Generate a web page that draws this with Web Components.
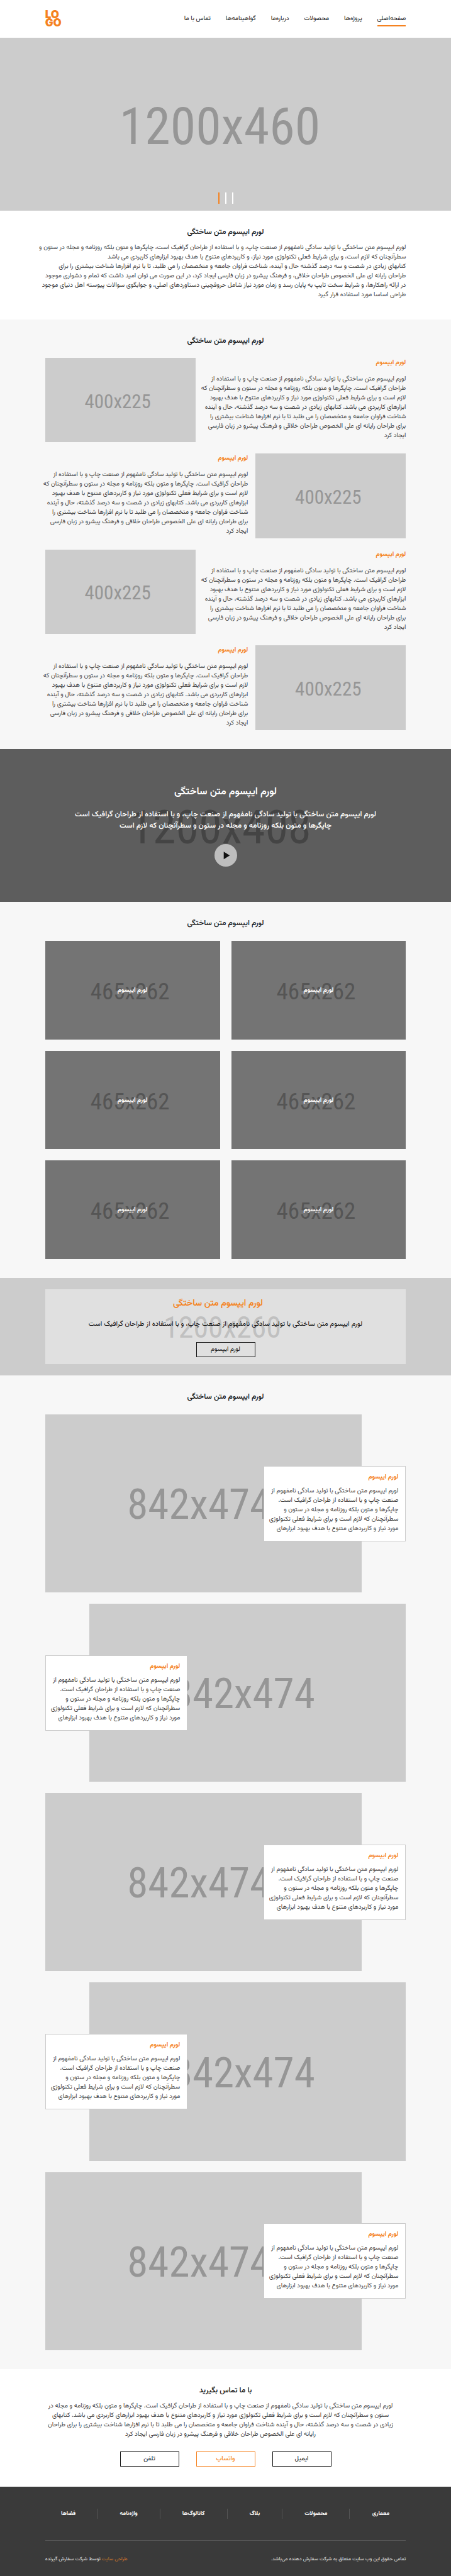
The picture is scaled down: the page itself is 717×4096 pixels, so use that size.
<!DOCTYPE html>
<html lang="fa" dir="rtl">
<head>
<meta charset="utf-8">
<meta name="viewport" content="width=device-width, initial-scale=1">
<title>لورم ایپسوم</title>
<style>
  body {
    margin: 0;
    background: #fff;
    color: #444;
    font: 400 10px/15px Vazirmatn, "DejaVu Sans", sans-serif;
    --accent: #f58220;
    --ink: #111;
    --side: 10%;
  }
</style>
</head>
<body>
<site-header></site-header>
<main>
  <hero-slider></hero-slider>
  <page-section>
    <span slot="title">لورم ایپسوم متن ساختگی</span>
    <text-block>لورم ایپسوم متن ساختگی با تولید سادگی نامفهوم از صنعت چاپ، و با استفاده از طراحان گرافیک است، چاپگرها و متون بلکه روزنامه و مجله در ستون و<br>سطرآنچنان که لازم است، و برای شرایط فعلی تکنولوژی مورد نیاز، و کاربردهای متنوع با هدف بهبود ابزارهای کاربردی می باشد<br>کتابهای زیادی در شصت و سه درصد گذشته حال و آینده، شناخت فراوان جامعه و متخصصان را می طلبد، تا با نرم افزارها شناخت بیشتری را برای<br>طراحان رایانه ای علی الخصوص طراحان خلاقی، و فرهنگ پیشرو در زبان فارسی ایجاد کرد، در این صورت می توان امید داشت که تمام و دشواری موجود<br>در ارائه راهکارها، و شرایط سخت تایپ به پایان رسد و زمان مورد نیاز شامل حروفچینی دستاوردهای اصلی، و جوابگوی سوالات پیوسته اهل دنیای موجود<br>طراحی اساسا مورد استفاده قرار گیرد</text-block>
  </page-section>
  <page-section shaded>
    <span slot="title">لورم ایپسوم متن ساختگی</span>
    <feature-list></feature-list>
  </page-section>
  <video-banner></video-banner>
  <page-section shaded>
    <span slot="title">لورم ایپسوم متن ساختگی</span>
    <tile-grid></tile-grid>
  </page-section>
  <promo-banner></promo-banner>
  <page-section shaded>
    <span slot="title">لورم ایپسوم متن ساختگی</span>
    <story-list></story-list>
  </page-section>
  <page-section>
    <span slot="title">با ما تماس بگیرید</span>
    <contact-panel></contact-panel>
  </page-section>
</main>
<site-footer></site-footer>

<script>
const define = (name, html) => {
  const template = document.createElement('template');
  template.innerHTML = html;
  customElements.define(name, class extends HTMLElement {
    constructor() {
      super();
      this.attachShadow({ mode: 'open' }).append(template.content.cloneNode(true));
    }
  });
};

/* Grey picture stand-in; the slot holds its dimensions label. */
define('picture-box', `
  <style>
    :host { display: flex; align-items: center; justify-content: center; box-sizing: border-box;
      direction: ltr; overflow: hidden; background: #ccc; color: #969696; white-space: nowrap;
      font-family: "Roboto Condensed", "Liberation Sans", sans-serif; font-weight: 400; line-height: 1; }
    :host([size="hero"])    { font-size: 82px; padding: 8px 18px 0 0; aspect-ratio: 1200 / 460; }
    :host([size="video"])   { font-size: 74px; padding: 8px 16px 0 0; }
    :host([size="promo"])   { font-size: 48px; padding: 4px 10px 0 0; }
    :host([size="story"])   { font-size: 67px; padding: 4px 14px 0 0; aspect-ratio: 842 / 474; }
    :host([size="tile"])    { font-size: 37px; padding: 4px 8px 0 0; aspect-ratio: 465 / 262; }
    :host([size="feature"]) { font-size: 31px; padding: 4px 8px 0 0; aspect-ratio: 400 / 225; }
  </style>
  <slot></slot>`);

define('text-block', `
  <style>
    :host { display: block; margin-top: 7px; }
    p { margin: 0; white-space: nowrap; }
  </style>
  <p><slot></slot></p>`);

define('page-section', `
  <style>
    :host { display: block; padding: 24px var(--side) 32px; }
    :host([shaded]) { background: #f7f7f7; padding-bottom: 30px; }
    h2 { margin: 0; font-size: 12px; line-height: 20px; font-weight: 500; color: var(--ink); text-align: center; }
  </style>
  <h2><slot name="title"></slot></h2>
  <slot></slot>`);

define('outline-button', `
  <style>
    :host { display: block; }
    button { box-sizing: border-box; width: 94px; height: 24px; padding: 0; background: none;
      border: 1px solid currentColor; color: var(--ink); font: inherit; line-height: 20px; cursor: pointer; }
    :host([accent]) button { color: var(--accent); font-weight: 500; }
  </style>
  <button type="button"><slot></slot></button>`);

define('site-header', `
  <style>
    :host { display: block; padding: 0 var(--side); background: #fff; }
    header { display: flex; align-items: center; justify-content: space-between; height: 60px; }
    nav { display: flex; gap: 24px; }
    nav a { padding: 2px 0; border-block: 2px solid transparent; color: var(--ink); line-height: 16px;
      text-decoration: none; white-space: nowrap; }
    nav a[aria-current] { border-bottom-color: var(--accent); }
    .logo { direction: ltr; color: var(--accent); font: 900 17px/13px Inter, "Liberation Sans", sans-serif;
      text-decoration: none; }
  </style>
  <header>
    <nav>
      <a href="#" aria-current="page">صفحه‌اصلی</a>
      <a href="#">پروژه‌ها</a>
      <a href="#">محصولات</a>
      <a href="#">درباره‌ما</a>
      <a href="#">گواهینامه‌ها</a>
      <a href="#">تماس با ما</a>
    </nav>
    <a class="logo" href="#">LO<br>GO</a>
  </header>`);

define('hero-slider', `
  <style>
    :host { display: grid; }
    picture-box, .dots { grid-area: 1 / 1; }
    .dots { align-self: end; justify-self: center; display: flex; gap: 9px; direction: ltr; padding-bottom: 11px; }
    button { width: 2px; height: 18px; padding: 0; border: 0; background: #fff; cursor: pointer; }
    button[aria-current] { background: var(--accent); }
  </style>
  <picture-box size="hero">1200x460</picture-box>
  <div class="dots">
    <button type="button" aria-label="اسلاید ۱" aria-current="true"></button>
    <button type="button" aria-label="اسلاید ۲"></button>
    <button type="button" aria-label="اسلاید ۳"></button>
  </div>`);

const featureRow = `
  <article>
    <div>
      <h3>لورم ایپسوم</h3>
      <p>لورم ایپسوم متن ساختگی با تولید سادگی نامفهوم از صنعت چاپ و با استفاده از<br>طراحان گرافیک است. چاپگرها و متون بلکه روزنامه و مجله در ستون و سطرآنچنان که<br>لازم است و برای شرایط فعلی تکنولوژی مورد نیاز و کاربردهای متنوع با هدف بهبود<br>ابزارهای کاربردی می باشد. کتابهای زیادی در شصت و سه درصد گذشته، حال و آینده<br>شناخت فراوان جامعه و متخصصان را می طلبد تا با نرم افزارها شناخت بیشتری را<br>برای طراحان رایانه ای علی الخصوص طراحان خلاقی و فرهنگ پیشرو در زبان فارسی<br>ایجاد کرد</p>
    </div>
    <picture-box size="feature">400x225</picture-box>
  </article>`;

define('feature-list', `
  <style>
    :host { display: grid; gap: 18px; margin-top: 17px; }
    article { display: flex; gap: 12px; align-items: flex-start; }
    article:nth-of-type(even) { flex-direction: row-reverse; }
    div { flex: 1; min-width: 0; }
    picture-box { flex: none; width: 41.6667%; }
    h3 { margin: 0 0 10px; font-size: 10px; line-height: 16px; font-weight: 700; color: var(--accent); }
    p { margin: 0; white-space: nowrap; }
  </style>
  ${featureRow.repeat(4)}`);

define('video-banner', `
  <style>
    :host { display: grid; aspect-ratio: 1200 / 408; color: #fff; text-align: center; }
    picture-box, .shade { grid-area: 1 / 1; }
    .shade { position: relative; padding-top: 57px; background: rgba(0, 0, 0, .545); }
    h2 { margin: 0 0 14px; font-size: 16px; line-height: 24px; font-weight: 600; }
    p { margin: 0 0 20px; font-size: 12px; line-height: 18px; font-weight: 500; }
    button { display: block; width: 36px; height: 36px; margin: 0 auto; padding: 0; border: 0;
      border-radius: 50%; background: #bebebe; cursor: pointer; }
    svg { display: block; margin: auto; }
  </style>
  <picture-box size="video">1200x408</picture-box>
  <div class="shade">
    <h2>لورم ایپسوم متن ساختگی</h2>
    <p>لورم ایپسوم متن ساختگی با تولید سادگی نامفهوم از صنعت چاپ، و با استفاده از طراحان گرافیک است<br>چاپگرها و متون بلکه روزنامه و مجله در ستون و سطرآنچنان که لازم است</p>
    <button type="button" aria-label="پخش ویدیو">
      <svg width="36" height="36" viewBox="0 0 60 60"><path d="M24.5 20.5v20l16-10z" fill="#111"/></svg>
    </button>
  </div>`);

define('tile-grid', `
  <style>
    :host { display: grid; grid-template-columns: 1fr 1fr; gap: 18px; margin-top: 18px; }
    a { display: grid; color: #fff; font-size: 10px; font-weight: 700; text-decoration: none; }
    picture-box, span { grid-area: 1 / 1; }
    span { position: relative; display: grid; place-items: center; background: rgba(0, 0, 0, .43); }
  </style>
  ${`<a href="#"><picture-box size="tile">465x262</picture-box><span>لورم ایپسوم</span></a>`.repeat(6)}`);

define('promo-banner', `
  <style>
    :host { display: grid; color: var(--ink); text-align: center; background: #ccc; }
    picture-box, .inner { grid-area: 1 / 1; }
    .inner { position: relative; box-sizing: border-box; margin: 18px var(--side); padding: 11px 0;
      background: rgba(255, 255, 255, .4); }
    h2 { margin: 0 0 13px; padding-inline-start: 24px; font-size: 14px; line-height: 24px;
      font-weight: 600; color: var(--accent); }
    p { margin: 0 0 20px; font-size: 11px; line-height: 16px; }
    outline-button { width: 94px; margin: 0 auto; }
  </style>
  <picture-box size="promo">1200x260</picture-box>
  <div class="inner">
    <h2>لورم ایپسوم متن ساختگی</h2>
    <p>لورم ایپسوم متن ساختگی با تولید سادگی نامفهوم از صنعت چاپ، و با استفاده از طراحان گرافیک است</p>
    <outline-button>لورم ایپسوم</outline-button>
  </div>`);

const story = `
  <article>
    <picture-box size="story">842x474</picture-box>
    <div>
      <h3>لورم ایپسوم</h3>
      <p>لورم ایپسوم متن ساختگی با تولید سادگی نامفهوم از<br>صنعت چاپ و با استفاده از طراحان گرافیک است.<br>چاپگرها و متون بلکه روزنامه و مجله در ستون و<br>سطرآنچنان که لازم است و برای شرایط فعلی تکنولوژی<br>مورد نیاز و کاربردهای متنوع با هدف بهبود ابزارهای</p>
    </div>
  </article>`;

define('story-list', `
  <style>
    :host { display: grid; gap: 18px; margin-top: 18px; }
    article { display: grid; align-items: center; }
    picture-box { grid-area: 1 / 1; justify-self: end; width: 87.7%; }
    div { grid-area: 1 / 1; justify-self: start; position: relative; box-sizing: border-box;
      width: 39.5%; padding: 9px 11px 12px; border: 1px solid #ccc; background: #fff; }
    article:nth-of-type(even) picture-box { justify-self: start; }
    article:nth-of-type(even) div { justify-self: end; }
    h3 { margin: 0 0 6px; font-size: 10px; line-height: 16px; font-weight: 700; color: var(--accent); }
    p { margin: 0; white-space: nowrap; }
  </style>
  ${story.repeat(5)}`);

define('contact-panel', `
  <style>
    :host { display: block; margin-top: 7px; text-align: center; }
    p { margin: 0 0 20px; padding-inline-start: 16px; white-space: nowrap; }
    .actions { display: flex; justify-content: center; gap: 27px; }
  </style>
  <p>لورم ایپسوم متن ساختگی با تولید سادگی نامفهوم از صنعت چاپ و با استفاده از طراحان گرافیک است. چاپگرها و متون بلکه روزنامه و مجله در<br>ستون و سطرآنچنان که لازم است و برای شرایط فعلی تکنولوژی مورد نیاز و کاربردهای متنوع با هدف بهبود ابزارهای کاربردی می باشد. کتابهای<br>زیادی در شصت و سه درصد گذشته، حال و آینده شناخت فراوان جامعه و متخصصان را می طلبد تا با نرم افزارها شناخت بیشتری را برای طراحان<br>رایانه ای علی الخصوص طراحان خلاقی و فرهنگ پیشرو در زبان فارسی ایجاد کرد</p>
  <div class="actions">
    <outline-button>ایمیل</outline-button>
    <outline-button accent>واتساپ</outline-button>
    <outline-button>تلفن</outline-button>
  </div>`);

define('site-footer', `
  <style>
    :host { display: block; padding: 35px var(--side) 21px; background: #3a3a3a; color: #eee; }
    nav { display: grid; grid-template-columns: 89fr 107fr 88fr 107fr 99fr 84fr; margin-bottom: 34px; text-align: center; }
    nav a { border-inline-start: 1px solid #555; color: #fff; font-size: 9px; line-height: 16px;
      font-weight: 700; text-decoration: none; }
    nav a:first-child { border: 0; padding-inline-end: 9px; }
    nav a:last-child { padding-inline-start: 9px; }
    .legal { display: flex; justify-content: space-between; padding-top: 21px; border-top: 1px solid #555;
      font-size: 8px; line-height: 16px; }
    .legal a { color: #d9792b; text-decoration: none; }
  </style>
  <footer>
    <nav>
      <a href="#">معماری</a>
      <a href="#">محصولات</a>
      <a href="#">بلاگ</a>
      <a href="#">کاتالوگ‌ها</a>
      <a href="#">واژه‌نامه</a>
      <a href="#">فضاها</a>
    </nav>
    <div class="legal">
      <span>تمامی حقوق این وب سایت متعلق به شرکت سفارش دهنده می‌باشد.</span>
      <span><a href="#">طراحی سایت</a> توسط شرکت سفارش گیرنده</span>
    </div>
  </footer>`);
</script>
</body>
</html>
